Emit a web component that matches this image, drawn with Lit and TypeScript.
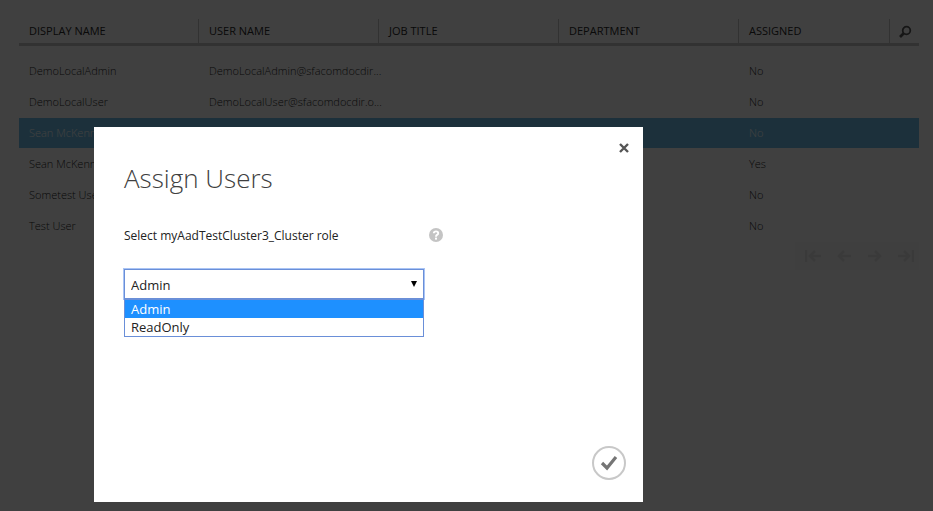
import { LitElement, html, svg, css } from "lit";
import { customElement, property, state } from "lit/decorators.js";
import { classMap } from "lit/directives/class-map.js";

interface User {
  name: string;
  login: string;
  assigned: string;
  selected?: boolean;
}

const USERS: User[] = [
  { name: "DemoLocalAdmin", login: "DemoLocalAdmin@sfacomdocdir...", assigned: "No" },
  { name: "DemoLocalUser", login: "DemoLocalUser@sfacomdocdir.o...", assigned: "No" },
  { name: "Sean McKenna", login: "", assigned: "No", selected: true },
  { name: "Sean McKenna", login: "", assigned: "Yes" },
  { name: "Sometest User", login: "", assigned: "No" },
  { name: "Test User", login: "", assigned: "No" },
];

const PAGES = [
  { label: "First page", path: "M1 0V12M16 6H5M10 1L5 6L10 11" },
  { label: "Previous page", path: "M15 6H3M8 1L3 6L8 11" },
  { label: "Next page", path: "M1 6H13M8 1L13 6L8 11" },
  { label: "Last page", path: "M15 0V12M0 6H11M6 1L11 6L6 11" },
];

@customElement("user-table")
export class UserTable extends LitElement {
  static styles = css`
    :host {
      display: block;
    }
    .grid {
      width: 100%;
      table-layout: fixed;
      border-collapse: separate;
      border-spacing: 0;
      font-size: 11px;
      line-height: 14px;
      font-weight: 300;
      color: #282828;
    }
    .col {
      width: 20%;
    }
    .col-tool {
      width: 29px;
    }
    .head {
      height: 24px;
      box-sizing: content-box;
      padding: 0 0 0 10px;
      border-bottom: 3px solid #c8c8c8;
      border-right: 1px solid #c8c8c8;
      text-align: left;
      font-weight: 400;
      color: #282828;
    }
    .head.last {
      border-right: 0;
      padding: 0;
      text-align: center;
    }
    .spacer {
      height: 10px;
      padding: 0;
    }
    .cell {
      height: 30px;
      box-sizing: content-box;
      padding: 0 0 0 10px;
      border-bottom: 1px solid transparent;
      background-clip: padding-box;
      white-space: nowrap;
    }
    .selected .cell {
      background-color: #70c0ec;
      color: #fff;
    }
    .tool {
      border: 0;
      padding: 0;
      background: none;
      display: inline-flex;
      vertical-align: middle;
    }
    .pager {
      display: flex;
      justify-content: flex-end;
    }
    .page {
      display: flex;
      align-items: center;
      justify-content: center;
      width: 31px;
      height: 28px;
      padding: 0 0 0 5px;
      border: 0;
      background: #fcfcfc;
    }
  `;

  render() {
    return html`
      <table class="grid">
        <colgroup>
          <col class="col" /><col class="col" /><col class="col" /><col class="col" />
          <col /><col class="col-tool" />
        </colgroup>
        <thead>
          <tr>
            ${["DISPLAY NAME", "USER NAME", "JOB TITLE", "DEPARTMENT", "ASSIGNED"].map(
              (h) => html`<th class="head" scope="col">${h}</th>`
            )}
            <th class="head last">
              <button class="tool" aria-label="Search">
                <svg width="14" height="14" viewBox="0 0 14 14" fill="none" stroke="#585858">
                  <circle cx="8.5" cy="5.5" r="3.8" stroke-width="1.8" />
                  <path d="M6 8L2 12" stroke-width="2.6" />
                </svg>
              </button>
            </th>
          </tr>
        </thead>
        <tbody>
          <tr><td class="spacer" colspan="6"></td></tr>
          ${USERS.map(
            (u) => html`<tr class=${classMap({ selected: !!u.selected })}>
              <td class="cell">${u.name}</td>
              <td class="cell">${u.login}</td>
              <td class="cell"></td>
              <td class="cell"></td>
              <td class="cell">${u.assigned}</td>
              <td class="cell"></td>
            </tr>`
          )}
        </tbody>
      </table>
      <nav class="pager" aria-label="Pages">
        ${PAGES.map(
          (p) => html`<button class="page" aria-label=${p.label}>
            <svg width="16" height="12" viewBox="0 0 16 12" fill="none" stroke="#e6e6e6" stroke-width="2.6">
              ${svg`<path d=${p.path} />`}
            </svg>
          </button>`
        )}
      </nav>
    `;
  }
}

@customElement("role-picker")
export class RolePicker extends LitElement {
  @property({ type: Array }) roles: string[] = [];
  @state() private value = "Admin";

  static styles = css`
    :host {
      display: block;
      font-size: 13px;
    }
    .label {
      display: flex;
      align-items: center;
      height: 16px;
      margin-bottom: 26px;
      font-size: 12px;
      color: #222;
    }
    .text {
      width: 305px;
    }
    .help {
      display: flex;
      padding: 0;
      border: 0;
      background: none;
    }
    .select {
      display: block;
      box-sizing: border-box;
      width: 300px;
      height: 30px;
      padding: 2px 6px 0;
      border: 1px solid #6a8fd8;
      border-radius: 0;
      outline: 1px solid #a9c4f5;
      outline-offset: 0;
      appearance: none;
      background: #fff;
      font: inherit;
      color: #222;
    }
    .box {
      position: relative;
      width: 300px;
    }
    .caret {
      position: absolute;
      right: 7px;
      top: 12px;
      pointer-events: none;
    }
    .list {
      position: absolute;
      left: 0;
      top: 100%;
      box-sizing: border-box;
      width: 300px;
      margin: 0;
      padding: 0;
      list-style: none;
      border: 1px solid #6a8fd8;
      background: #fff;
      color: #222;
    }
    .option {
      height: 18px;
      padding: 0 6px;
      line-height: 18px;
    }
    .option.on {
      background: #1e90ff;
      color: #fff;
    }
  `;

  render() {
    return html`
      <div class="label">
        <label class="text" for="role">Select myAadTestCluster3_Cluster role</label>
        <button class="help" aria-label="Help">
          <svg width="14" height="14" viewBox="0 0 14 14">
            <circle cx="7" cy="7" r="7" fill="#c4c4c4" />
            <path d="M4.8 5.2Q4.9 3.4 7 3.4Q9.2 3.4 9.2 5.2Q9.2 6.2 8 6.9Q7 7.5 7 8.7" fill="none" stroke="#fff" stroke-width="1.9" />
            <rect x="6" y="9.6" width="2" height="2" fill="#fff" />
          </svg>
        </button>
      </div>
      <div class="box">
        <select
          class="select"
          id="role"
          @change=${(e: Event) => (this.value = (e.target as HTMLSelectElement).value)}
        >
          ${this.roles.map((r) => html`<option ?selected=${r === this.value}>${r}</option>`)}
        </select>
        <svg class="caret" width="6" height="6" viewBox="0 0 6 6"><path d="M0 0H6L3 6Z" /></svg>
        <ul class="list" role="listbox" aria-label="Roles">
          ${this.roles.map(
            (r) => html`<li
              class=${classMap({ option: true, on: r === this.value })}
              role="option"
              aria-selected=${r === this.value}
              @click=${() => (this.value = r)}
            >${r}</li>`
          )}
        </ul>
      </div>
    `;
  }
}

@customElement("app-root")
export class AppRoot extends LitElement {
  static styles = css`
    :host {
      display: block;
      position: relative;
      box-sizing: border-box;
      min-height: 100vh;
      padding: 19px 14px 0 19px;
      background: #fff;
      font-family: "Open Sans", "Noto Sans", sans-serif;
    }
    .shade {
      position: absolute;
      inset: 0;
      background: rgba(0, 0, 0, 0.75);
    }
    .dialog {
      position: absolute;
      left: 94px;
      top: 127px;
      display: flex;
      flex-direction: column;
      box-sizing: border-box;
      width: 549px;
      min-height: 375px;
      padding: 16px 14px 21px 30px;
      background: #fff;
    }
    .close,
    .done {
      display: flex;
      align-self: flex-end;
      padding: 0;
      border: 0;
      background: none;
    }
    .title {
      margin: 7px 0 31px;
      font-size: 26px;
      line-height: 36px;
      font-weight: 300;
      color: #404040;
    }
    .done {
      margin-top: auto;
      margin-right: 2px;
    }
  `;

  render() {
    return html`
      <user-table></user-table>
      <div class="shade"></div>
      <section class="dialog" role="dialog" aria-labelledby="title">
        <button class="close" aria-label="Close">
          <svg width="10" height="10" viewBox="0 0 10 10" fill="none" stroke="#555" stroke-width="2.4">
            <path d="M1 1L9 9M9 1L1 9" />
          </svg>
        </button>
        <h1 class="title" id="title">Assign Users</h1>
        <role-picker .roles=${["Admin", "ReadOnly"]}></role-picker>
        <button class="done" aria-label="Complete">
          <svg width="36" height="36" viewBox="0 0 36 36" fill="none">
            <circle cx="18" cy="18" r="16" stroke="#c8c8c8" stroke-width="2" />
            <path d="M11 18L16 23L25 12" stroke="#757575" stroke-width="3.2" />
          </svg>
        </button>
      </section>
    `;
  }
}
